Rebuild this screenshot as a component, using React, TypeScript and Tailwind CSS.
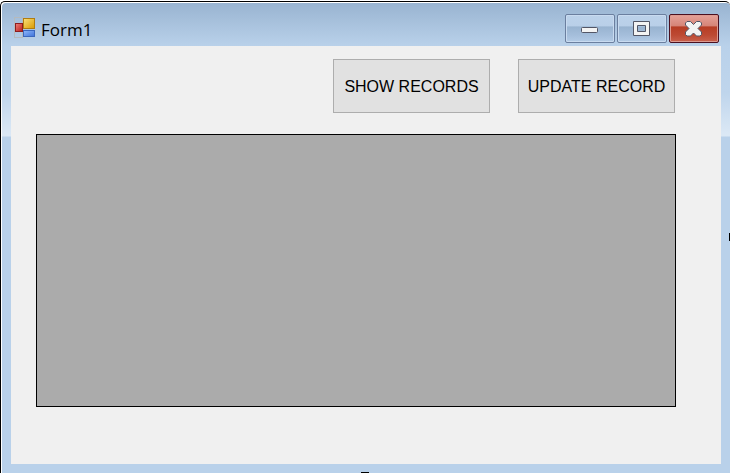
import type { ReactNode } from "react";

function FormIcon() {
  return (
    <svg width="22" height="22" viewBox="0 0 22 22" aria-hidden="true" shapeRendering="crispEdges">
      <defs>
        <linearGradient id="red" x1="0" y1="0" x2="1" y2="1">
          <stop offset="0" stopColor="#f08078" />
          <stop offset="1" stopColor="#b81c18" />
        </linearGradient>
        <linearGradient id="gold" x1="0" y1="0" x2="1" y2="1">
          <stop offset="0" stopColor="#fbe07a" />
          <stop offset="1" stopColor="#d99a00" />
        </linearGradient>
        <linearGradient id="blue" x1="0" y1="0" x2="1" y2="1">
          <stop offset="0" stopColor="#8fb8fb" />
          <stop offset="1" stopColor="#3f72d8" />
        </linearGradient>
      </defs>
      <path d="M0.5 0.5H9M0.5 0V20.5M0 20.5H9M8.5 0V21" stroke="#b5babd" fill="none" />
      <rect x="1.5" y="6.5" width="7" height="8" fill="url(#red)" stroke="#8e1d1d" />
      <rect x="9.5" y="1.5" width="11" height="10" fill="url(#gold)" stroke="#b07c10" />
      <rect x="9.5" y="13.5" width="11" height="6" fill="url(#blue)" stroke="#3c67bd" />
    </svg>
  );
}

function CaptionButton({ label, danger, children }: { label: string; danger?: boolean; children: ReactNode }) {
  const tone = danger
    ? "border-[#4b1020] bg-[linear-gradient(#e5a299,#d58376_42%,#b63c24_43%,#bd4a33_75%,#c9614d)] shadow-[inset_0_0_0_1px_#dc9a90]"
    : "border-[#6b7f9f] bg-[linear-gradient(#bcd2ea,#b9cfe8_42%,#98b3d0_43%,#a5bedb_75%,#b3cbe6)] shadow-[inset_0_0_0_1px_#c9dbf0]";
  return (
    <button
      type="button"
      aria-label={label}
      className={`flex h-[29px] w-[50px] items-center justify-center rounded-[2px] border ${tone}`}
    >
      {children}
    </button>
  );
}

function CommandButton({ children }: { children: ReactNode }) {
  return (
    <button
      type="button"
      className="h-[54px] w-[157px] border border-[#adadad] bg-[#e1e1e1] pt-0.5 text-base whitespace-nowrap text-black"
    >
      {children}
    </button>
  );
}

export default function App() {
  return (
    <div className="relative flex min-h-screen flex-col overflow-hidden bg-white pt-px font-['Liberation_Sans',Arial,sans-serif]">
      <div className="flex grow flex-col rounded-t-[5px] border-t border-l border-black bg-white pt-px pl-px">
        <div className="flex grow flex-col rounded-t-[4px] bg-[#b9d1ea] bg-[linear-gradient(#99b4d1,#b9d1ea_43px,#bfd5ec_90px,#dbe8f5_131px,#dbe8f5_133px,#b9d1ea_134px)] pr-[9px] pb-[9px] pl-[9px]">
          <header className="flex h-[43px] items-start pt-[11px] pl-[3px]">
            <div className="pt-[3px]">
              <FormIcon />
            </div>
            <h1 className="grow pt-1 pl-[5px] font-['Open_Sans','Noto_Sans',sans-serif] text-[17px] leading-6 text-black">
              Form1
            </h1>
            <div className="flex gap-[2px] pr-[2px]">
              <CaptionButton label="Minimize">
                <svg width="18" height="8" viewBox="0 0 18 8" className="mt-1" aria-hidden="true">
                  <rect x=".5" y=".5" width="16" height="5" rx="1" fill="#f3f3f3" stroke="#535666" />
                </svg>
              </CaptionButton>
              <CaptionButton label="Maximize">
                <svg width="18" height="16" viewBox="0 0 18 16" aria-hidden="true">
                  <path
                    d="M.5 .5H16.5V14.5H.5ZM4.5 4.5V10.5H12.5V4.5Z"
                    fill="#f3f3f3"
                    fillRule="evenodd"
                    stroke="#535666"
                  />
                </svg>
              </CaptionButton>
              <CaptionButton label="Close" danger>
                <svg width="18" height="16" viewBox="0 0 18 16" aria-hidden="true">
                  <path
                    d="M2 .5H5.5L8.5 3.5 11.5 .5H15L16.5 2V4L13 7.5 16.5 11V13.5L15 15H11.5L8.5 12 5.5 15H2L.5 13.5V11L4 7.5 .5 4V2Z"
                    fill="#f3f3f3"
                    stroke="#535666"
                    strokeLinejoin="round"
                  />
                </svg>
              </CaptionButton>
            </div>
          </header>
          <main className="flex grow flex-col bg-[#f0f0f0] pt-[13px] pr-[45px] pb-[57px] pl-[25px]">
            <div className="flex justify-end gap-7 pr-px">
              <CommandButton>SHOW RECORDS</CommandButton>
              <CommandButton>UPDATE RECORD</CommandButton>
            </div>
            <section aria-label="Records" className="mt-[21px] min-h-[200px] grow border border-black bg-[#ababab]" />
          </main>
        </div>
      </div>
      <span className="absolute top-1/2 right-0 h-2 w-px -translate-y-1/2 bg-black" />
      <span className="absolute bottom-0 left-1/2 h-px w-2 -translate-x-1/2 bg-black" />
    </div>
  );
}
